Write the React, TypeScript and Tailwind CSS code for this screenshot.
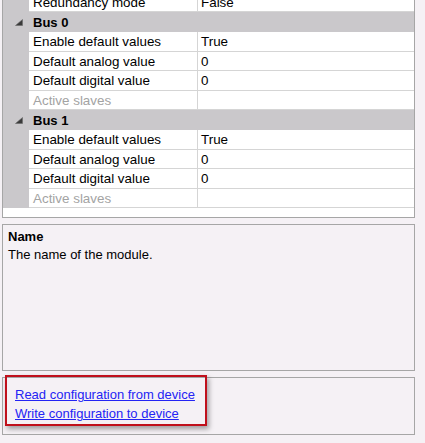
import React from 'react';

type Row =
  | { kind: 'category'; label: string }
  | { kind: 'property'; label: string; value: string; disabled?: boolean };

const rows: Row[] = [
  { kind: 'property', label: 'Redundancy mode', value: 'False' },
  { kind: 'category', label: 'Bus 0' },
  { kind: 'property', label: 'Enable default values', value: 'True' },
  { kind: 'property', label: 'Default analog value', value: '0' },
  { kind: 'property', label: 'Default digital value', value: '0' },
  { kind: 'property', label: 'Active slaves', value: '', disabled: true },
  { kind: 'category', label: 'Bus 1' },
  { kind: 'property', label: 'Enable default values', value: 'True' },
  { kind: 'property', label: 'Default analog value', value: '0' },
  { kind: 'property', label: 'Default digital value', value: '0' },
  { kind: 'property', label: 'Active slaves', value: '', disabled: true },
];

// expanded-node glyph shown in the gutter of category rows
function ExpandedGlyph() {
  return (
    <svg width="8" height="7" viewBox="0 0 8 7" className="block">
      <polygon points="0.5,6.5 7.5,6.5 7.5,0.5" fill="#3a3a3a" stroke="#6a6a6a" strokeWidth="0.6" />
    </svg>
  );
}

function GridRow({ row }: { row: Row }) {
  if (row.kind === 'category') {
    return (
      <div className="flex h-[19.6px] items-center bg-[#cac8cb]">
        <div className="flex w-[26px] justify-end pr-[6px] pt-[1px]">
          <ExpandedGlyph />
        </div>
        <div className="pl-[4px] pt-[1px] font-bold leading-[15px] text-black">{row.label}</div>
      </div>
    );
  }

  const textColor = row.disabled ? 'text-[#a3a3a3]' : 'text-black';
  return (
    <div className="flex h-[19.6px] text-[13.4px]">
      <div className="w-[26px] shrink-0 bg-[#cac8cb]" />
      <div className={`flex w-[169px] shrink-0 items-center border-b border-r border-[#d5d5d5] bg-white pl-[4px] pt-[1px] leading-[15px] ${textColor}`}>
        {row.label}
      </div>
      <div className="flex flex-1 items-center border-b border-[#d5d5d5] bg-white pl-[3px] pt-[1px] leading-[15px] text-black">
        {row.value}
      </div>
    </div>
  );
}

export default function App() {
  return (
    <div className="h-[443px] w-[425px] overflow-hidden bg-[#f5f1f5] font-['Liberation_Sans',Arial,sans-serif] text-[13px]">
      {/* property grid, scrolled a few pixels down */}
      <div className="ml-[2px] flex h-[218px] w-[413px] flex-col overflow-hidden border-x border-b border-[#a6a6a6] bg-white">
        <div className="mt-[-7.2px]">
          {rows.map((row, i) => (
            <GridRow key={i} row={row} />
          ))}
        </div>
        <div className="flex-1 bg-white" />
      </div>

      {/* help pane */}
      <div className="ml-[2px] mt-[6px] h-[147px] w-[413px] border border-[#a6a6a6] px-[5px] pt-[4px] text-black">
        <div className="font-bold leading-[15px]">Name</div>
        <div className="mt-[3px] leading-[15px]">The name of the module.</div>
      </div>

      {/* commands pane */}
      <div className="relative ml-[2px] mt-[6px] h-[58px] w-[413px] border border-[#a6a6a6] pl-[12px] pt-[7px]">
        <div className="flex flex-col items-start leading-[19px]">
          <a href="#" className="text-[#2424f4] underline">Read configuration from device</a>
          <a href="#" className="text-[#2424f4] underline">Write configuration to device</a>
        </div>
        <div className="pointer-events-none absolute left-[2px] top-[-3px] h-[51px] w-[202px] border-2 border-[#c0101c] shadow-[2px_3px_5px_rgba(0,0,0,0.35)]" />
      </div>
    </div>
  );
}
